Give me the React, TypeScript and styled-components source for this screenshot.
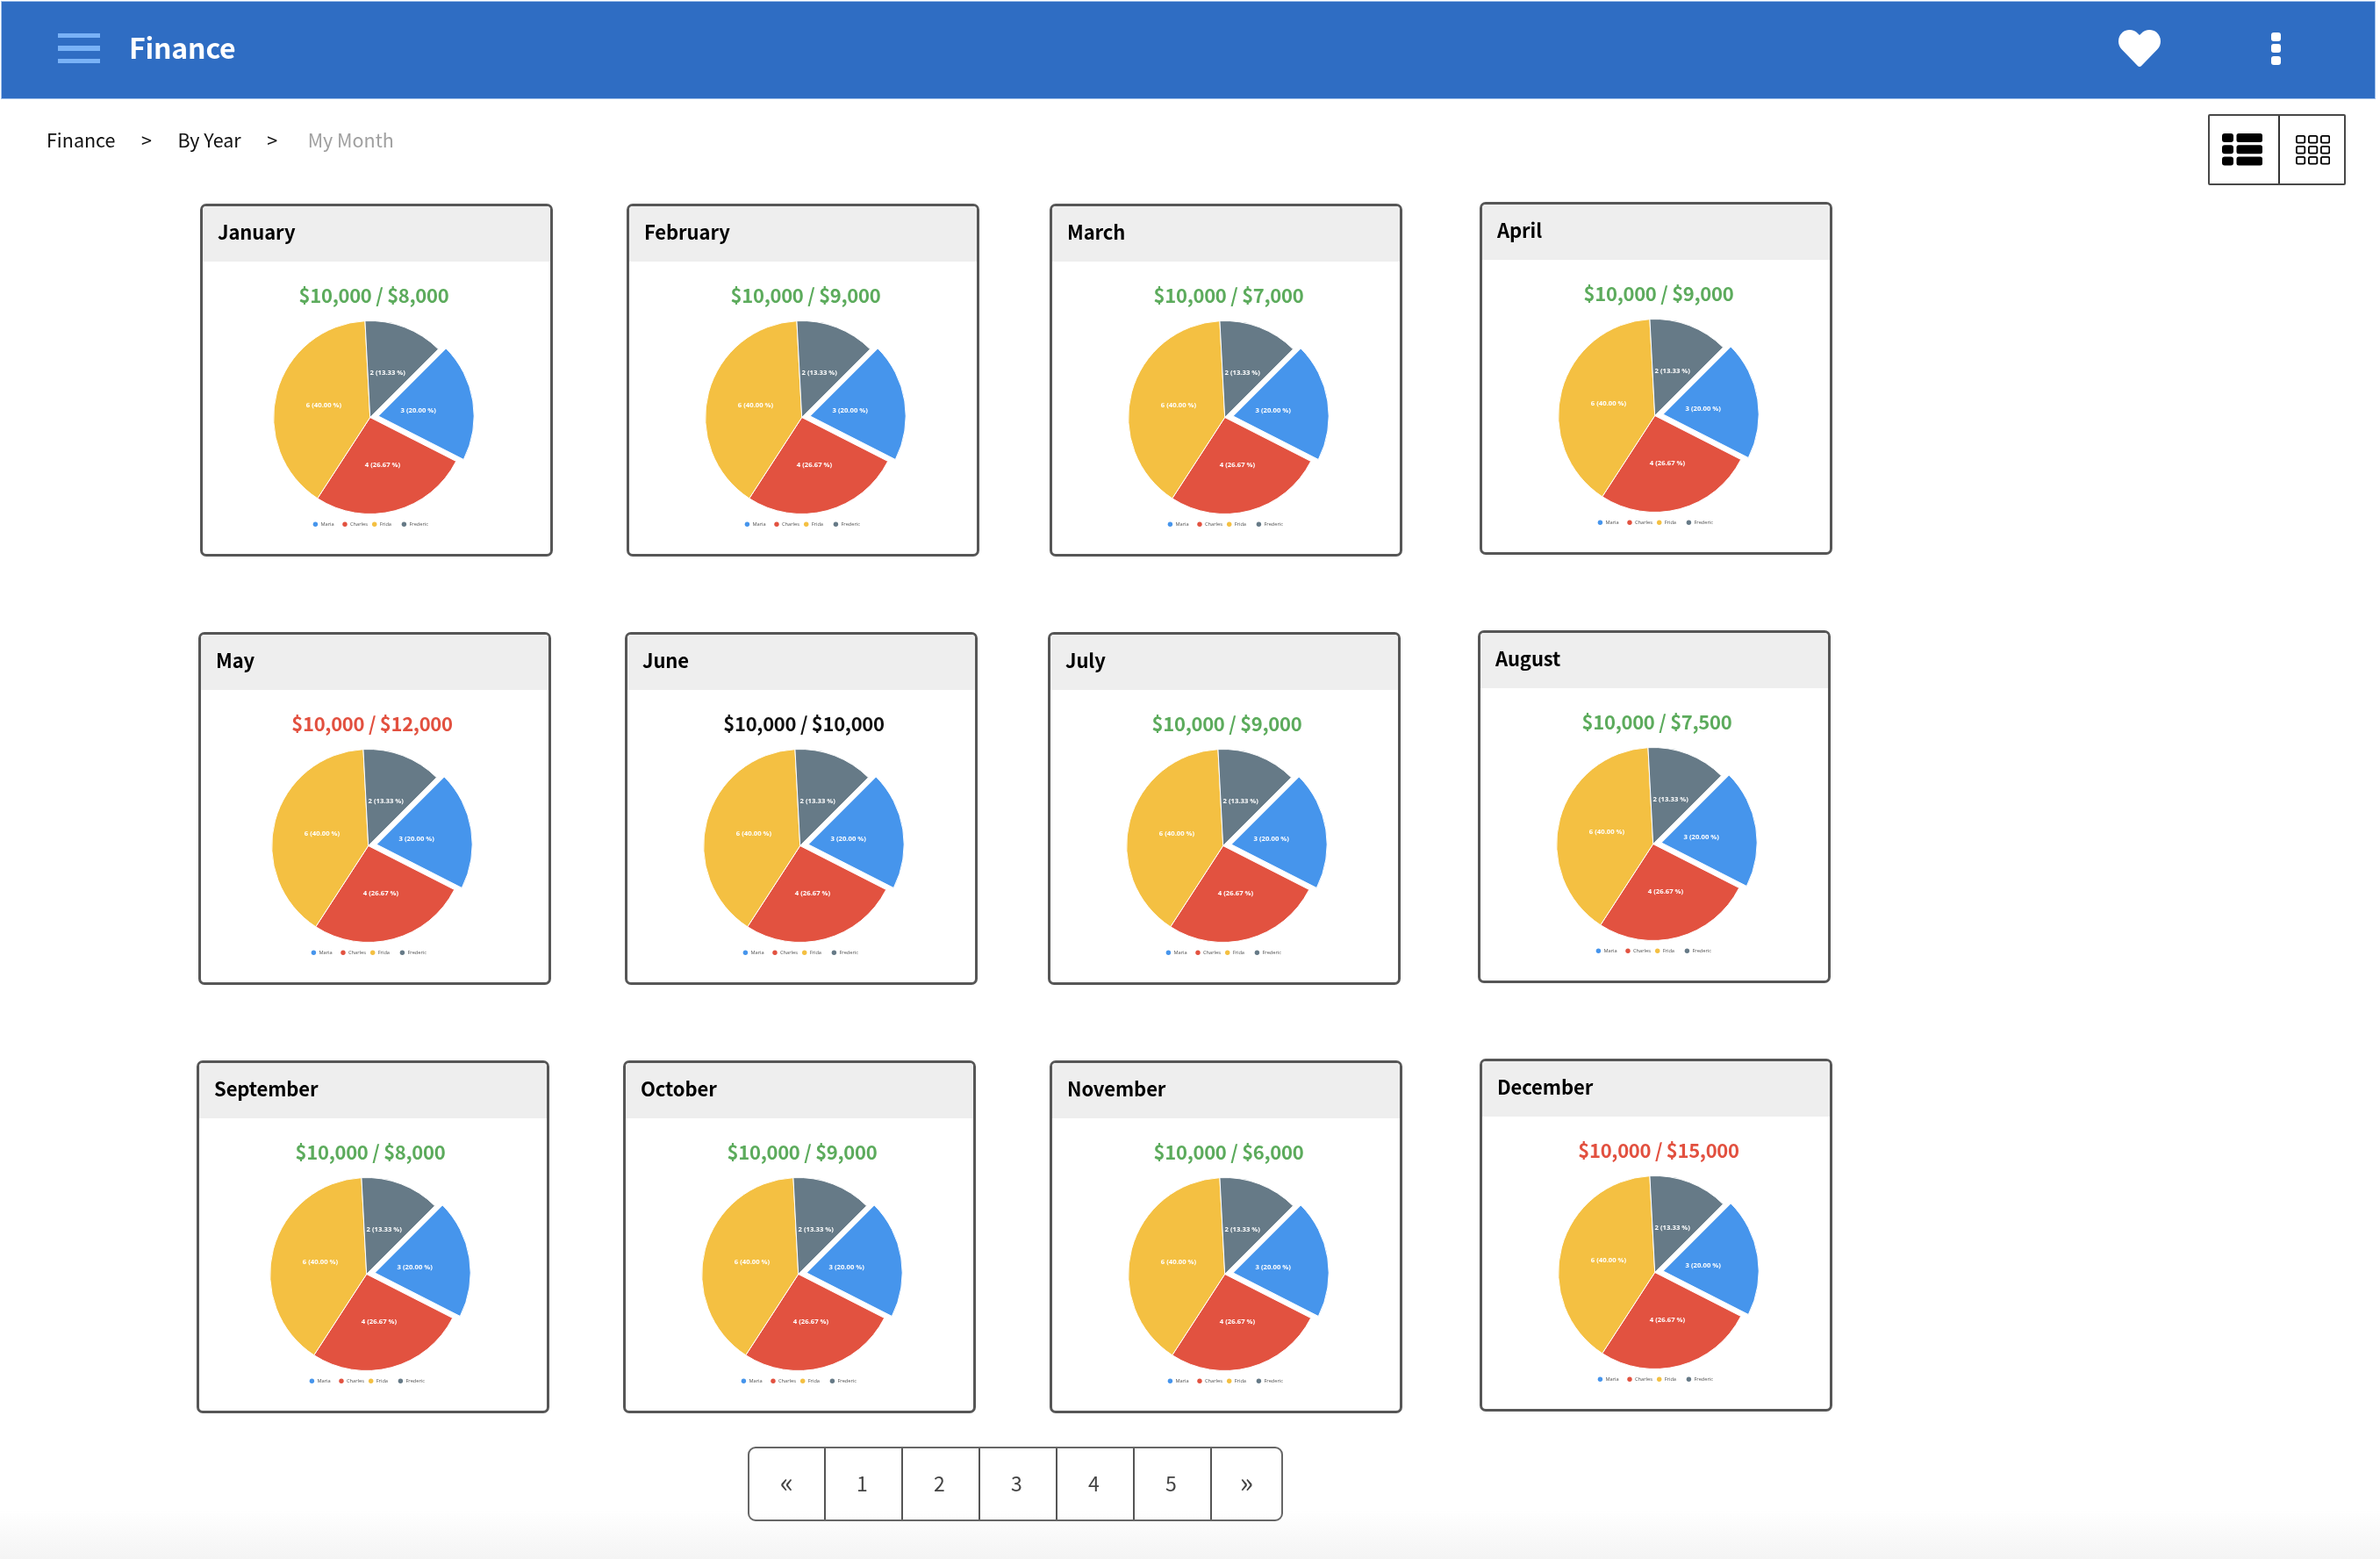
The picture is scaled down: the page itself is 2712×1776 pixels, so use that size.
import styled, { createGlobalStyle } from 'styled-components'
import { FaHeart } from 'react-icons/fa'

const GlobalStyle = createGlobalStyle`
    html, body {
        margin: 0;
        padding: 0;
        background: #fff;
    }
    body {
        font-family: "Noto Sans CJK SC", "Source Sans Pro", "Noto Sans", sans-serif;
        color: #000;
    }
`

type Tone = 'under' | 'over' | 'even'

interface Month {
    name: string;
    amount: string;
    tone: Tone;
    gap: number;
    shift: number;
    lift?: number;
}

const monthRows: Month[][] = [
    [
        { name: 'January', amount: '$10,000 / $8,000', tone: 'under', gap: 228, shift: -3 },
        { name: 'February', amount: '$10,000 / $9,000', tone: 'under', gap: 84, shift: 3 },
        { name: 'March', amount: '$10,000 / $7,000', tone: 'under', gap: 80, shift: 3 },
        { name: 'April', amount: '$10,000 / $9,000', tone: 'under', gap: 88, shift: 3, lift: 2 },
    ],
    [
        { name: 'May', amount: '$10,000 / $12,000', tone: 'over', gap: 226, shift: -3 },
        { name: 'June', amount: '$10,000 / $10,000', tone: 'even', gap: 84, shift: 3 },
        { name: 'July', amount: '$10,000 / $9,000', tone: 'under', gap: 80, shift: 3 },
        { name: 'August', amount: '$10,000 / $7,500', tone: 'under', gap: 88, shift: 3, lift: 2 },
    ],
    [
        { name: 'September', amount: '$10,000 / $8,000', tone: 'under', gap: 224, shift: -3 },
        { name: 'October', amount: '$10,000 / $9,000', tone: 'under', gap: 84, shift: 3 },
        { name: 'November', amount: '$10,000 / $6,000', tone: 'under', gap: 84, shift: 3 },
        { name: 'December', amount: '$10,000 / $15,000', tone: 'over', gap: 88, shift: 3, lift: 2 },
    ],
]

const toneColors: Record<Tone, string> = {
    under: '#5cab5c',
    over: '#e2503f',
    even: '#111',
}

const pages = ['«', '1', '2', '3', '4', '5', '»']

const slices = [
    { from: 45, to: 117, r: 109, color: '#4695ec', dx: 9.5, dy: -1.5 },
    { from: 117, to: 213, r: 110, color: '#e25240', dx: 0, dy: 0 },
    { from: 213, to: 357, r: 110, color: '#f4c042', dx: 0, dy: 0 },
    { from: -3, to: 45, r: 110, color: '#667a87', dx: 0, dy: 0 },
]

const labels = [
    { text: '2 (13.33 %)', x: 20, y: -51.3 },
    { text: '3 (20.00 %)', x: 55, y: -8 },
    { text: '4 (26.67 %)', x: 14.3, y: 53.7 },
    { text: '6 (40.00 %)', x: -52.7, y: -14 },
]

const legend = [
    { name: 'Maria', x: -62.3, color: '#4695ec' },
    { name: 'Charles', x: -28.7, color: '#e25240' },
    { name: 'Frida', x: 5, color: '#f4c042' },
    { name: 'Frederic', x: 38.7, color: '#667a87' },
]

const CX = 135.7
const CY = 124.5

const point = (angle: number, r: number, ox: number, oy: number) => {
    const rad = (angle * Math.PI) / 180
    return `${(CX + ox + r * Math.sin(rad)).toFixed(2)} ${(CY + oy - r * Math.cos(rad)).toFixed(2)}`
}

const slicePath = ({ from, to, r, dx, dy }: typeof slices[number]) =>
    `M${CX + dx} ${CY + dy}L${point(from, r, dx, dy)}A${r} ${r} 0 ${to - from > 180 ? 1 : 0} 1 ${point(to, r, dx, dy)}Z`

function PieChart() {
    return (
        <PieSvg viewBox="0 0 280 256">
            {slices.map(slice => (
                <path key={slice.color} d={slicePath(slice)} fill={slice.color} stroke="#fff" strokeWidth="1" />
            ))}
            {labels.map(label => (
                <SliceLabel key={label.text} x={CX + label.x} y={CY + label.y + 2.8} textAnchor="middle">
                    {label.text}
                </SliceLabel>
            ))}
            {legend.map(item => (
                <g key={item.name}>
                    <circle cx={CX + item.x} cy={CY + 121.7} r="2.7" fill={item.color} />
                    <LegendLabel x={CX + item.x + 6} y={CY + 123.8}>{item.name}</LegendLabel>
                </g>
            ))}
        </PieSvg>
    )
}

export default function App() {
    return (
        <Page>
            <GlobalStyle />
            <Header>
                <HeaderLeft>
                    <Burger>
                        <span /><span /><span />
                    </Burger>
                    <Title>Finance</Title>
                </HeaderLeft>
                <HeaderRight>
                    <FaHeart size={48} color="#fff" />
                    <Dots>
                        <span /><span /><span />
                    </Dots>
                </HeaderRight>
            </Header>

            <Toolbar>
                <Breadcrumb>
                    <span>Finance</span>
                    <Sep>&gt;</Sep>
                    <span>By Year</span>
                    <Sep>&gt;</Sep>
                    <Current>My Month</Current>
                </Breadcrumb>
                <Toggle>
                    <ToggleCell $width={80} $nudge={-3}>
                        <svg width="46" height="37" viewBox="0 0 46 37">
                            {[0, 13.3, 26.6].map(y => (
                                <g key={y}>
                                    <rect x="0" y={y} width="13" height="10" rx="3" fill="#000" />
                                    <rect x="16.5" y={y} width="29.5" height="10" rx="2.5" fill="#000" />
                                </g>
                            ))}
                        </svg>
                    </ToggleCell>
                    <ToggleCell $width={77} $nudge={2}>
                        <svg width="39" height="34" viewBox="0 0 39 34">
                            {[0, 12, 24].map(y => [0, 14, 28].map(x => (
                                <rect key={`${x}-${y}`} x={x + 0.9} y={y + 0.9} width="9.4" height="7.8" rx="1.6" fill="none" stroke="#000" strokeWidth="1.8" />
                            )))}
                        </svg>
                    </ToggleCell>
                </Toggle>
            </Toolbar>

            <Rows>
                {monthRows.map(row => (
                    <Row key={row[0].name}>
                        {row.map(month => (
                            <Card key={month.name} $gap={month.gap} $lift={month.lift ?? 0}>
                                <CardHeader>{month.name}</CardHeader>
                                <CardBody $shift={month.shift}>
                                    <Amount $tone={month.tone}>{month.amount}</Amount>
                                    <PieChart />
                                </CardBody>
                            </Card>
                        ))}
                    </Row>
                ))}
            </Rows>

            <Pagination>
                {pages.map((page, i) => (
                    <PageCell key={page} $arrow={i === 0 || i === pages.length - 1}>{page}</PageCell>
                ))}
            </Pagination>
        </Page>
    )
}

const Page = styled.div`
    width: 2712px;
    height: 1776px;
    overflow: hidden;
    background: linear-gradient(to bottom, #fff 0, #fff 1720px, #f4f4f4 1776px);
    filter: blur(0.4px);
`

const Header = styled.header`
    box-sizing: border-box;
    width: 2704px;
    height: 110px;
    margin: 2px 0 0 2px;
    padding: 0 107px 4px 64px;
    display: flex;
    align-items: center;
    justify-content: space-between;
    background: #2f6dc3;
    box-shadow: 0 0 0 1px #a3c2ea;
`

const HeaderLeft = styled.div`
    display: flex;
    align-items: center;
    gap: 33px;
`

const Burger = styled.div`
    width: 48px;
    display: flex;
    flex-direction: column;
    gap: 9px;

    span {
        height: 5.5px;
        background: #79b2f6;
    }
`

const Title = styled.div`
    padding-bottom: 5px;
    font-size: 32px;
    line-height: 44px;
    font-weight: 700;
    letter-spacing: -0.2px;
    color: #fff;
`

const HeaderRight = styled.div`
    display: flex;
    align-items: center;
    gap: 126px;
`

const Dots = styled.div`
    display: flex;
    flex-direction: column;
    gap: 3.5px;

    span {
        width: 11px;
        height: 10px;
        border-radius: 3px;
        background: #fff;
    }
`

const Toolbar = styled.div`
    box-sizing: border-box;
    height: 120px;
    padding: 18px 39px 0 53px;
    display: flex;
    align-items: flex-start;
    justify-content: space-between;
`

const Breadcrumb = styled.nav`
    box-sizing: border-box;
    display: flex;
    align-items: center;
    height: 60px;
    padding-bottom: 3px;
    font-size: 21.5px;
    color: #111;
`

const Sep = styled.span`
    margin: 0 29.5px;
`

const Current = styled.span`
    margin-left: 5px;
    color: #a0a0a0;
`

const Toggle = styled.div`
    box-sizing: border-box;
    width: 157px;
    height: 81px;
    display: flex;
    border: 2.5px solid #484848;
    border-radius: 2px;
`

const ToggleCell = styled.div<{ $width: number; $nudge: number }>`
    box-sizing: border-box;
    width: ${({ $width }) => $width}px;
    display: flex;
    align-items: center;
    justify-content: center;

    svg {
        margin-left: ${({ $nudge }) => $nudge}px;
    }

    & + & {
        border-left: 2.5px solid #333;
    }
`

const Rows = styled.div`
    display: flex;
    flex-direction: column;
    gap: 86px;
`

const Row = styled.div`
    display: flex;
    align-items: flex-start;
`

const Card = styled.article<{ $gap: number; $lift: number }>`
    box-sizing: border-box;
    width: 402px;
    height: 402px;
    margin-left: ${({ $gap }) => $gap}px;
    margin-top: ${({ $lift }) => -$lift}px;
    border: 3px solid #565656;
    border-radius: 7px;
    overflow: hidden;
    background: #fff;
`

const CardHeader = styled.h2`
    box-sizing: border-box;
    height: 63px;
    margin: 0;
    padding: 0 17px 8px;
    display: flex;
    align-items: center;
    background: #eee;
    font-size: 22px;
    font-weight: 700;
    letter-spacing: -0.1px;
    color: #000;
`

const CardBody = styled.div<{ $shift: number }>`
    width: 100%;
    display: flex;
    flex-direction: column;
    align-items: center;
    padding-top: 21.5px;
    margin-left: ${({ $shift }) => $shift}px;
`

const Amount = styled.div<{ $tone: Tone }>`
    margin-bottom: 1.5px;
    font-size: 22px;
    line-height: 30px;
    font-weight: 700;
    letter-spacing: -0.3px;
    color: ${({ $tone }) => toneColors[$tone]};
`

const PieSvg = styled.svg`
    width: 280px;
    height: 256px;
    flex-shrink: 0;
`

const SliceLabel = styled.text`
    font-family: "Open Sans", sans-serif;
    font-size: 7.7px;
    font-weight: 700;
    fill: #fff;
`

const LegendLabel = styled.text`
    font-family: "Open Sans", sans-serif;
    font-size: 5.7px;
    fill: #555;
`

const Pagination = styled.nav`
    box-sizing: border-box;
    width: 610px;
    height: 85px;
    margin: 38px 0 0 852px;
    display: flex;
    border: 2px solid #666;
    border-radius: 9px;
`

const PageCell = styled.div<{ $arrow: boolean }>`
    box-sizing: border-box;
    width: 88px;
    display: flex;
    align-items: center;
    justify-content: center;
    padding-bottom: ${({ $arrow }) => ($arrow ? 7 : 3)}px;
    padding-right: ${({ $arrow }) => ($arrow ? 0 : 3)}px;
    font-size: ${({ $arrow }) => ($arrow ? 32 : 23)}px;
    color: #444;

    & + & {
        border-left: 2px solid #555;
    }
    &:first-child {
        width: 85px;
    }
    &:last-child {
        flex: 1;
    }
`
